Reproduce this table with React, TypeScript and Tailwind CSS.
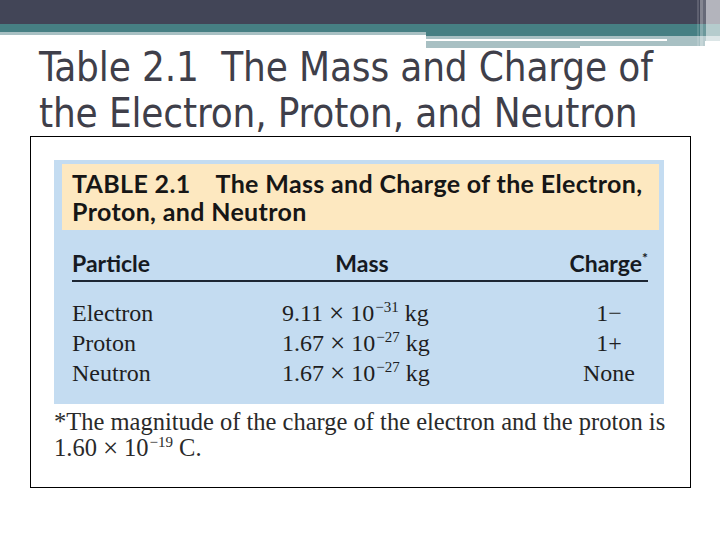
import React from "react";

function HeaderBand() {
  return (
    <svg width="720" height="48" viewBox="0 0 720 48" className="block">
      <rect x="0" y="0" width="720" height="48" fill="#ffffff" />
      <rect x="0" y="0" width="720" height="24" fill="#424557" />
      <rect x="0" y="24" width="720" height="8" fill="#467f83" />
      <rect x="0" y="32" width="426" height="3" fill="#a8c0c3" />
      <rect x="426" y="32" width="294" height="4" fill="#467f83" />
      <rect x="426" y="36" width="294" height="3" fill="#a8c0c3" />
      <rect x="426" y="39" width="241" height="2" fill="#ffffff" />
      <rect x="667" y="39" width="53" height="2" fill="#a8c0c3" />
      <rect x="426" y="41" width="154" height="7" fill="#a8c0c3" />
      <rect x="580" y="41" width="125" height="5" fill="#a8c0c3" />
      <rect x="697" y="0" width="2" height="52" fill="#ffffff" opacity="0.15" />
      <rect x="700" y="0" width="3" height="52" fill="#ffffff" opacity="0.35" />
      <rect x="703" y="0" width="3" height="52" fill="#ffffff" opacity="0.2" />
      <rect x="706" y="0" width="14" height="52" fill="#ffffff" opacity="0.6" />
    </svg>
  );
}

function Pow({ base, exp }: { base: string; exp: string }) {
  return (
    <span>
      {base}
      <sup className="text-[15px] top-[-9px] ml-[1px] mr-[6px]">{exp}</sup>
    </span>
  );
}

function Times() {
  return (
    <span className="text-[27px] leading-[0] px-[6px] relative top-[1px]">{"\u00d7"}</span>
  );
}

export default function App() {
  const rows = [
    { p: "Electron", m: "9.11", e: "\u221231", c: "1\u2212" },
    { p: "Proton", m: "1.67", e: "\u221227", c: "1+" },
    { p: "Neutron", m: "1.67", e: "\u221227", c: "None" },
  ];
  return (
    <div className="w-[720px] h-[540px] bg-white overflow-hidden relative">
      <HeaderBand />
      <div
        className="mt-[-4px] pl-[39px] text-[40px] leading-[46px] text-[#3f3f4a] whitespace-pre tracking-[-0.15px]"
        style={{ fontFamily: '"DejaVu Sans Condensed", "DejaVu Sans", sans-serif', fontStretch: "condensed" }}
      >
        <div>Table 2.1  The Mass and Charge of</div>
        <div>the Electron, Proton, and Neutron</div>
      </div>
      <div className="ml-[30px] w-[661px] h-[352px] border border-black pt-[23px] pl-[23px]">
        <div className="w-[610px] h-[244px] bg-[#c4dcf1] pt-[4px] pl-[8px]">
          <div
            className="w-[597px] h-[66px] bg-[#fde8c0] pl-[10px] pt-[5px] text-[25px] leading-[28px] tracking-[0.35px] font-bold text-[#161616]"
            style={{ fontFamily: 'Lato, "Open Sans", sans-serif' }}
          >
            <div className="whitespace-pre">TABLE 2.1    The Mass and Charge of the Electron,</div>
            <div>Proton, and Neutron</div>
          </div>
          <div className="pl-[10px] w-[586px]">
            <div
              className="mt-[19px] grid grid-cols-[210px_160px_1fr] text-[23px] leading-[28px] font-bold text-[#161a22]"
              style={{ fontFamily: 'Lato, "Open Sans", sans-serif' }}
            >
              <div>Particle</div>
              <div className="text-center">Mass</div>
              <div className="text-right">
                Charge<sup className="text-[14px] top-[-9px]">*</sup>
              </div>
            </div>
            <div className="w-[576px] h-[2px] bg-[#1d2633] mt-[3px]" />
            <div
              className="mt-[16px] text-[24px] leading-[30px] text-[#1e1e22]"
              style={{ fontFamily: '"Liberation Serif", serif' }}
            >
              {rows.map((r) => (
                <div key={r.p} className="grid grid-cols-[210px_160px_206px]">
                  <div>{r.p}</div>
                  <div className="whitespace-nowrap">
                    {r.m}
                    <Times />
                    <Pow base="10" exp={r.e} />
                    <span>kg</span>
                  </div>
                  <div className="justify-self-end w-[78px] text-center">{r.c}</div>
                </div>
              ))}
            </div>
          </div>
        </div>
        <div
          className="mt-[5px] text-[24.5px] leading-[26px] text-[#2a2a2a] whitespace-nowrap"
          style={{ fontFamily: '"Liberation Serif", serif' }}
        >
          <div>*The magnitude of the charge of the electron and the proton is</div>
          <div>
            1.60
            <Times />
            <Pow base="10" exp={"\u221219"} />
            <span>C.</span>
          </div>
        </div>
      </div>
    </div>
  );
}
